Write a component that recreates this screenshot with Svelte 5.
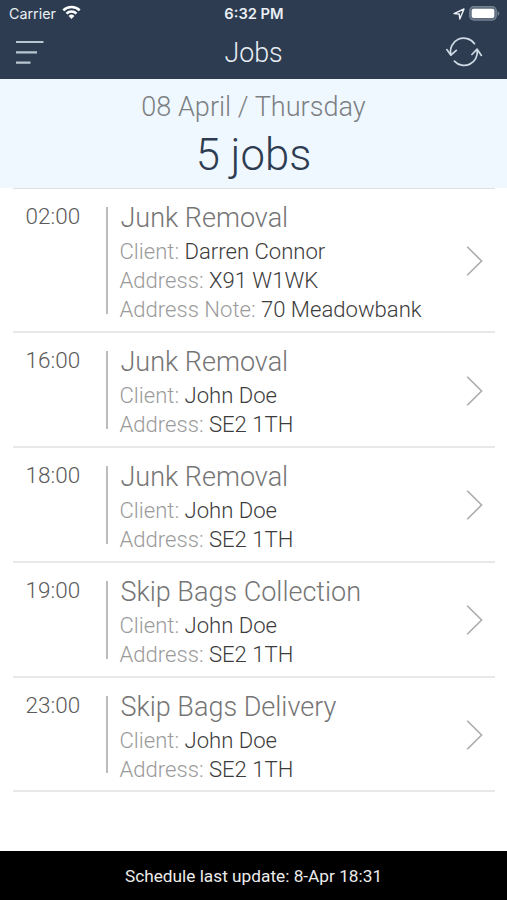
<script>
    let jobs = [
        {
            time: "02:00",
            title: "Junk Removal",
            details: [
                ["Client", "Darren Connor"],
                ["Address", "X91 W1WK"],
                ["Address Note", "70 Meadowbank"],
            ],
        },
        {
            time: "16:00",
            title: "Junk Removal",
            details: [
                ["Client", "John Doe"],
                ["Address", "SE2 1TH"],
            ],
        },
        {
            time: "18:00",
            title: "Junk Removal",
            details: [
                ["Client", "John Doe"],
                ["Address", "SE2 1TH"],
            ],
        },
        {
            time: "19:00",
            title: "Skip Bags Collection",
            details: [
                ["Client", "John Doe"],
                ["Address", "SE2 1TH"],
            ],
        },
        {
            time: "23:00",
            title: "Skip Bags Delivery",
            details: [
                ["Client", "John Doe"],
                ["Address", "SE2 1TH"],
            ],
        },
    ];
</script>

<div class="screen">
    <header>
        <div class="status">
            <div class="carrier">
                <span>Carrier</span>
                <svg width="19" height="15" viewBox="0 0 19 15">
                    <g fill="none" stroke="#fff" stroke-width="2.5">
                        <path d="M1.3 5.3a11.6 11.6 0 0 1 16.4 0" />
                        <path d="M4.5 8.7a7 7 0 0 1 10 0" />
                    </g>
                    <path d="M9.5 14 6.6 11a4.1 4.1 0 0 1 5.8 0z" fill="#fff" />
                </svg>
            </div>
            <div class="clock">6:32 PM</div>
            <div class="power">
                <svg width="12" height="12" viewBox="0 0 12 12">
                    <path
                        d="M1 5.6 11 1 6.8 11 6.2 6z"
                        fill="none"
                        stroke="#eef2f6"
                        stroke-width="1.4"
                        stroke-linejoin="round"
                    />
                </svg>
                <svg width="31" height="15" viewBox="0 0 31 15">
                    <rect x="0.7" y="0.7" width="26.6" height="13.4" rx="4" fill="#5f6c7e" stroke="#748092" stroke-width="1.2" />
                    <rect x="2.7" y="2.8" width="22.6" height="9.2" rx="2" fill="#fff" />
                    <path d="M28.6 5v5q1.7-.8 1.7-2.5T28.6 5z" fill="#7b8696" />
                </svg>
            </div>
        </div>
        <div class="bar">
            <button aria-label="Menu">
                <svg width="28" height="24" viewBox="0 0 28 24">
                    <path
                        d="M0 2h27.5M0 12.3h21M0 22.6h14.5"
                        stroke="#b9c5d1"
                        stroke-width="2.2"
                    />
                </svg>
            </button>
            <h1>Jobs</h1>
            <button aria-label="Refresh">
                <svg width="38" height="30" viewBox="0 0 38 30">
                    <g
                        fill="none"
                        stroke="#cfdae5"
                        stroke-width="1.7"
                        stroke-linecap="round"
                        stroke-linejoin="round"
                    >
                        <path d="M29.5 6.7A13.2 13.2 0 0 0 5.9 17.5" />
                        <path d="M1.8 12.6l4.1 5.6 5.4-4.9" />
                        <path d="M9.4 24.1A13.2 13.2 0 0 0 32.2 13.2" />
                        <path d="M26.9 17.5l5.2-5.3 4.3 6.2" />
                    </g>
                </svg>
            </button>
        </div>
    </header>

    <section class="summary">
        <div class="date">08 April / Thursday</div>
        <div class="count">{jobs.length} jobs</div>
    </section>

    <main>
        {#each jobs as job}
            <div class="job">
                <div class="time">{job.time}</div>
                <div class="line"></div>
                <div class="info">
                    <h2>{job.title}</h2>
                    {#each job.details as [label, value]}
                        <p><span>{label}:</span> {value}</p>
                    {/each}
                </div>
                <svg class="arrow" width="18" height="30" viewBox="0 0 18 30">
                    <path
                        d="M1.2 0.8 15.6 15 1.2 29.2"
                        fill="none"
                        stroke="#acacac"
                        stroke-width="1.6"
                    />
                </svg>
            </div>
        {/each}
    </main>

    <footer>Schedule last update: 8-Apr 18:31</footer>
</div>

<style>
    :global(body) {
        margin: 0;
    }
    .screen {
        display: flex;
        flex-direction: column;
        width: 100%;
        height: 100vh;
        overflow: hidden;
        background: #fff;
        font-family: Roboto, sans-serif;
        font-weight: 300;
    }
    header {
        box-sizing: border-box;
        height: 79px;
        flex: none;
        background: #2d3c51;
        color: #e9eff5;
    }
    .status {
        display: grid;
        grid-template-columns: 1fr auto 1fr;
        align-items: center;
        height: 27px;
        padding: 0 7px 0 9px;
        font-family: Inter, sans-serif;
        font-size: 14.3px;
        font-weight: 400;
    }
    .carrier {
        display: flex;
        align-items: center;
        gap: 6px;
    }
    .carrier svg {
        margin-top: -2px;
    }
    .clock {
        margin-right: 1px;
        font-size: 14.7px;
        font-weight: 600;
    }
    .power {
        display: flex;
        align-items: center;
        justify-content: flex-end;
        gap: 4px;
    }
    .bar {
        display: grid;
        grid-template-columns: 1fr auto 1fr;
        align-items: center;
        height: 50px;
        padding: 0 24px 0 16px;
    }
    button {
        display: flex;
        padding: 0;
        border: none;
        background: none;
    }
    button:last-child {
        justify-self: end;
    }
    h1 {
        margin: 0;
        padding: 2px 0 0 8px;
        font-size: 26.8px;
        font-weight: 300;
        line-height: 48px;
    }
    .summary {
        flex: none;
        height: 109px;
        background: #f0f8ff;
        text-align: center;
    }
    .date {
        padding-top: 10px;
        color: #7c8083;
        font-size: 27.1px;
        line-height: 36px;
    }
    .count {
        padding-top: 2px;
        color: #2d3c51;
        font-size: 43.6px;
        line-height: 58px;
    }
    main {
        flex: 1;
        margin: 0 12px 0 13px;
        border-top: 1px solid #dfe2e5;
    }
    .job {
        display: flex;
        border-bottom: 2px solid #e8e8e8;
        height: 112.8px;
    }
    .job:first-child {
        height: 142.2px;
    }
    .time {
        box-sizing: border-box;
        width: 92.5px;
        padding: 11px 0 0 12.5px;
        color: #5a5a5a;
        font-size: 22.5px;
        line-height: 32px;
    }
    .line {
        width: 2px;
        margin: 18px 0 17px;
        background: #bdbdbd;
    }
    .info {
        flex: 1;
        padding: 11px 0 0 12px;
    }
    h2 {
        margin: 0 0 1px;
        padding-left: 1px;
        color: #757575;
        font-size: 27px;
        font-weight: 300;
        line-height: 36px;
    }
    p {
        margin: 0;
        color: #3c3c3c;
        font-size: 22.1px;
        line-height: 29px;
    }
    p span {
        color: #9b9b9b;
    }
    .arrow {
        align-self: center;
        margin: 2px 11px 0 0;
    }
    footer {
        flex: none;
        height: 49px;
        background: #000;
        color: #ececec;
        font-size: 17.25px;
        font-weight: 400;
        line-height: 51px;
        text-align: center;
    }
</style>
